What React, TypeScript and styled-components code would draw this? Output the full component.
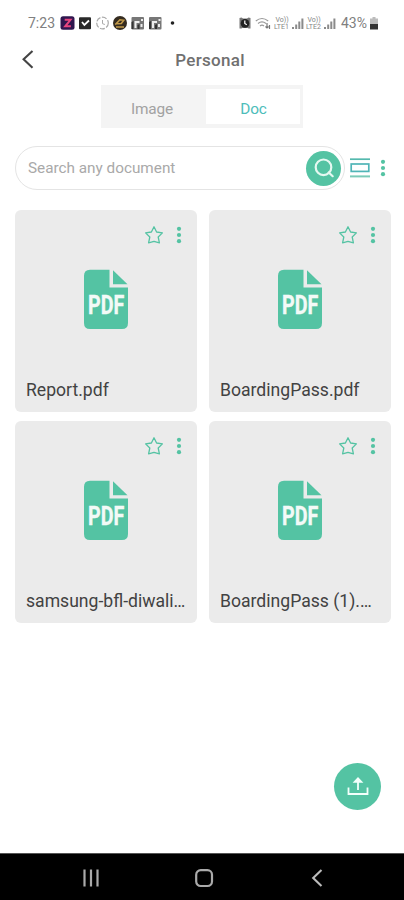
import React from "react";
import styled, { createGlobalStyle } from "styled-components";

const GREEN = "#54c3a3";

const GlobalStyle = createGlobalStyle`
  * { box-sizing: border-box; }
  body { margin: 0; background: #fff; font-family: Roboto, sans-serif; }
  button { border: 0; padding: 0; background: none; font: inherit; color: inherit; display: block; }
  svg { display: block; flex: none; }
`;

const Screen = styled.div`
  width: 404px;
  height: 900px;
  display: flex;
  flex-direction: column;
  background: #fff;
  overflow: hidden;
`;

const StatusBar = styled.div`
  height: 46px;
  padding: 0 26px 0 28px;
  display: flex;
  align-items: center;
  justify-content: space-between;
  color: #808080;
`;

const StatusGroup = styled.div<{ $gap: number }>`
  display: flex;
  align-items: center;
  gap: ${(p) => p.$gap}px;
`;

const StatusText = styled.span<{ $width: number; $left?: number }>`
  width: ${(p) => p.$width}px;
  margin-left: ${(p) => p.$left ?? 0}px;
  font-size: 14px;
  line-height: 16px;
  white-space: nowrap;
`;

const Header = styled.header`
  height: 28px;
  display: grid;
  grid-template-columns: 60px 1fr 60px;
  align-items: center;
`;

const BackButton = styled.button`
  padding-left: 20px;
`;

const Title = styled.h1`
  margin: 0;
  padding-left: 16px;
  text-align: center;
  font-size: 17px;
  line-height: 24px;
  font-weight: 500;
  letter-spacing: 0.3px;
  color: #707070;
`;

const Tabs = styled.div`
  width: 202px;
  height: 43px;
  margin: 11px 0 0 101px;
  padding: 4px 3px 4px 0;
  display: grid;
  grid-template-columns: 105px 1fr;
  background: #f4f4f4;
`;

const Tab = styled.button<{ $active?: boolean }>`
  background: ${(p) => (p.$active ? "#fff" : "transparent")};
  color: ${(p) => (p.$active ? "#4dbdba" : "#a2a2a2")};
  font-size: 15.4px;
  letter-spacing: -0.2px;
  text-align: center;
  padding: ${(p) => (p.$active ? "4px 0 0 1px" : "4px 3px 0 0")};
`;

const Toolbar = styled.div`
  height: 44px;
  margin: 18px 14px 0 15px;
  display: flex;
  align-items: center;
`;

const SearchBox = styled.div`
  width: 330px;
  height: 44px;
  padding: 0 3px 0 12px;
  display: flex;
  align-items: center;
  justify-content: space-between;
  border: 1px solid #e4e4e4;
  border-radius: 22px;
  font-size: 15.3px;
  color: #a9a9a9;
`;

const RoundButton = styled.button<{ $size: number }>`
  width: ${(p) => p.$size}px;
  height: ${(p) => p.$size}px;
  border-radius: 50%;
  background: ${GREEN};
  display: grid;
  place-items: center;
`;

const ToolButton = styled.button<{ $left: number }>`
  margin-left: ${(p) => p.$left}px;
`;

const Grid = styled.main`
  margin: 20px 13px 0 15px;
  display: grid;
  grid-template-columns: 182px 182px;
  grid-auto-rows: 202px;
  gap: 9px 12px;
`;

const Card = styled.article`
  border-radius: 6px;
  background: #ebebeb;
  display: flex;
  flex-direction: column;
  align-items: center;
  padding: 15px 11px 0;
`;

const CardActions = styled.div`
  align-self: flex-end;
  display: flex;
  align-items: center;
  gap: 12px;
  height: 20px;
  padding-right: 4px;
`;

const FileArt = styled.div`
  margin-top: 24px;
`;

const FileName = styled.div`
  align-self: stretch;
  margin-top: 48px;
  line-height: 24px;
  font-size: 17.6px;
  color: #424242;
  white-space: nowrap;
`;

const Footer = styled.div`
  flex: 1;
  display: flex;
  justify-content: flex-end;
  align-items: flex-end;
  padding: 0 23px 43px 0;
`;

const NavBar = styled.nav`
  height: 47px;
  border-top: 1px solid #555;
  background: #000;
  display: grid;
  grid-template-columns: 20px 20px 20px;
  column-gap: 93px;
  justify-content: center;
  align-items: center;
  padding: 2px 0 0 4px;
`;

const Dots = () => (
  <svg width="6" height="18" viewBox="0 0 6 18" fill={GREEN}>
    <circle cx="3" cy="2.8" r="2.1" />
    <circle cx="3" cy="9" r="2.1" />
    <circle cx="3" cy="15.2" r="2.1" />
  </svg>
);

const Star = () => (
  <svg width="20" height="20" viewBox="0 0 20 20" fill="none" stroke={GREEN} strokeWidth="1.3" strokeLinejoin="round">
    <path d="M10 1.8l2.6 5.2 5.8.9-4.2 4.1 1.2 5.9L10 16.4l-5.4 1.5L5.8 12 1.6 7.9l5.8-.9z" />
  </svg>
);

const PdfIcon = () => (
  <svg width="46" height="61" viewBox="0 0 46 61">
    <path d="M7 .7h19.5v17.8H45V54q0 6-6 6H7q-6 0-6-6V6.7q0-6 6-6z" fill={GREEN} />
    <path d="M30 1.2v14h14.5z" fill={GREEN} />
    <text
      transform="translate(5 45.2) scale(.77 1)"
      fontFamily="Roboto, sans-serif"
      fontSize="25.5"
      fontWeight="700"
      fill="#f3faf7"
      stroke="#f3faf7"
      strokeWidth=".4"
    >
      PDF
    </text>
  </svg>
);

const SearchIcon = () => (
  <svg width="22" height="22" viewBox="0 0 22 22" fill="none" stroke="#e5f8f1" strokeWidth="2.2" strokeLinecap="round">
    <circle cx="10.5" cy="10.3" r="7.8" />
    <path d="M15.7 15.5l4 3.7" />
  </svg>
);

const ViewIcon = () => (
  <svg width="20" height="22" viewBox="0 0 20 22" fill="none" strokeWidth="1.7">
    <path d="M0 2.2h20" stroke="#54b9ae" />
    <rect x="1.2" y="7" width="17.6" height="7.4" stroke="#50b5b7" />
    <path d="M0 19.4h20" stroke="#7bcbb8" strokeWidth="2" />
  </svg>
);

const UploadIcon = () => (
  <svg width="22" height="20" viewBox="0 0 22 20" fill="none" stroke="#f2fffb" strokeWidth="1.8">
    <path d="M1.5 10.5v6.5h19v-6.5M11 13V2.8" />
    <path d="M5.6 5.8L11 0l5.4 5.8z" fill="#f2fffb" stroke="none" />
  </svg>
);

const NoticeIcons = () => (
  <svg width="116" height="16" viewBox="0 0 116 16">
    <rect x=".5" y="1.2" width="14" height="13.6" rx="2.5" fill="#30164f" />
    <path d="M4.7 4.8h5.8l-5.3 6.5h5.7" fill="none" stroke="#e8467f" strokeWidth="2" />
    <rect x="19" y="2.2" width="12" height="12" rx="1" fill="#292929" />
    <path d="M22 7l2.4 3L29 5.5" fill="none" stroke="#fff" strokeWidth="1.8" />
    <circle cx="42.5" cy="8" r="5.8" fill="none" stroke="#aaa" strokeWidth="1.2" strokeDasharray="5 1.5" />
    <path d="M42.5 5v3.7l2.4.8" fill="none" stroke="#aaa" />
    <circle cx="60" cy="8" r="7" fill="#352c20" />
    <path d="M55.3 9.6l4.6-4.8 3.8.5-2.4 3.2-4.2.3M56 12h8" fill="none" stroke="#c29a4a" strokeWidth="1.6" />
    {[71.5, 89].map((x) => (
      <g key={x} transform={`translate(${x} 2)`}>
        <rect width="12.5" height="12.5" rx="1" fill="#777" />
        <path d="M3 4h5v2H5v5H3zM9.5 2h2v2h-2zM9 7h2v3H9z" fill="#eee" />
        <path d="M0 12V5l2-1v8zM6 8l2-1v5H6z" fill="#333" />
      </g>
    ))}
    <circle cx="112.5" cy="8" r="1.8" fill="#222" />
  </svg>
);

const AlarmIcon = () => (
  <svg width="12" height="12" viewBox="0 0 12 12">
    <path d="M.5 1l2-.5L4 1.5h4L9.5.5l2 .5v10.5h-2l-.7-.6H3.2l-.7.6h-2z" fill="#777" />
    <circle cx="6" cy="6.4" r="4.3" fill="#222" />
    <path d="M5.8 3.5v3l2 1.3" stroke="#fff" strokeWidth="1.2" fill="none" />
  </svg>
);

const WifiIcon = () => (
  <svg width="19" height="13" viewBox="-2 0 19 13" fill="none" stroke="#999" strokeWidth="1.2">
    <path d="M.8 4q6.2-5 12.4 0M3 6.5q4-3.2 8 0M5 9q2-1.6 4 0" />
    <path d="M12 6v5M10.5 9.5L12 11l1.5-1.5M14.5 12V8" stroke="#777" />
  </svg>
);

const LteIcon = ({ top, bottom }: { top: string; bottom: string }) => (
  <svg width="16" height="14" viewBox="0 0 16 14" fontFamily="Roboto, sans-serif" fontSize="7" fill="#858585">
    <text x="1.5" y="6">{top}</text>
    <text x="0" y="13">{bottom}</text>
  </svg>
);

const SignalIcon = () => (
  <svg width="12" height="13" viewBox="0 0 12 13" fill="#8a8a8a">
    <path d="M0 10h2v2H0zM3.2 7.5h2V12h-2zM6.3 4.5h2V12h-2zM9.4 1.5h2V12h-2z" />
  </svg>
);

const BatteryIcon = () => (
  <svg width="8" height="13" viewBox="0 0 8 13">
    <path d="M2.5 0h3v1.5H8V12H0V1.5h2.5z" fill="#bcbcbc" />
    <path d="M0 7h8v5.5H0z" fill="#333" />
  </svg>
);

const files = ["Report.pdf", "BoardingPass.pdf", "samsung-bfl-diwali…", "BoardingPass (1).…"];

const FileCard = ({ name }: { name: string }) => (
  <Card>
    <CardActions>
      <button aria-label="Favourite"><Star /></button>
      <button aria-label="Options"><Dots /></button>
    </CardActions>
    <FileArt><PdfIcon /></FileArt>
    <FileName>{name}</FileName>
  </Card>
);

export default function App() {
  return (
    <Screen>
      <GlobalStyle />
      <StatusBar>
        <StatusGroup $gap={4}>
          <StatusText $width={28}>7:23</StatusText>
          <NoticeIcons />
        </StatusGroup>
        <StatusGroup $gap={2}>
          <AlarmIcon />
          <WifiIcon />
          <LteIcon top="Vo))" bottom="LTE1" />
          <SignalIcon />
          <LteIcon top="Vo))" bottom="LTE2" />
          <SignalIcon />
          <StatusText $width={27} $left={3}>43%</StatusText>
          <BatteryIcon />
        </StatusGroup>
      </StatusBar>
      <Header>
        <BackButton aria-label="Back">
          <svg width="14" height="20" viewBox="0 0 14 20" fill="none" stroke="#444" strokeWidth="2.1">
            <path d="M12.5 1L3.6 9.3l8.9 8.5" />
          </svg>
        </BackButton>
        <Title>Personal</Title>
      </Header>
      <Tabs>
        <Tab>Image</Tab>
        <Tab $active>Doc</Tab>
      </Tabs>
      <Toolbar>
        <SearchBox>
          <span>Search any document</span>
          <RoundButton $size={35} aria-label="Search"><SearchIcon /></RoundButton>
        </SearchBox>
        <ToolButton $left={5} aria-label="Change view"><ViewIcon /></ToolButton>
        <ToolButton $left={10} aria-label="More"><Dots /></ToolButton>
      </Toolbar>
      <Grid>
        {files.map((name) => <FileCard key={name} name={name} />)}
      </Grid>
      <Footer>
        <RoundButton $size={47} aria-label="Upload"><UploadIcon /></RoundButton>
      </Footer>
      <NavBar>
        <svg width="20" height="20" viewBox="0 0 20 20" stroke="#aaa" strokeWidth="2.2">
          <path d="M3.5 1.5v17M10 1.5v17M16.5 1.5v17" />
        </svg>
        <svg width="20" height="20" viewBox="0 0 20 20" fill="none" stroke="#aaa" strokeWidth="2.2">
          <rect x="2.2" y="2.2" width="15.8" height="15.8" rx="4.5" />
        </svg>
        <svg width="20" height="20" viewBox="0 0 20 20" fill="none" stroke="#bbb" strokeWidth="2.1">
          <path d="M14.5 2L6.2 10l8.3 8" />
        </svg>
      </NavBar>
    </Screen>
  );
}
